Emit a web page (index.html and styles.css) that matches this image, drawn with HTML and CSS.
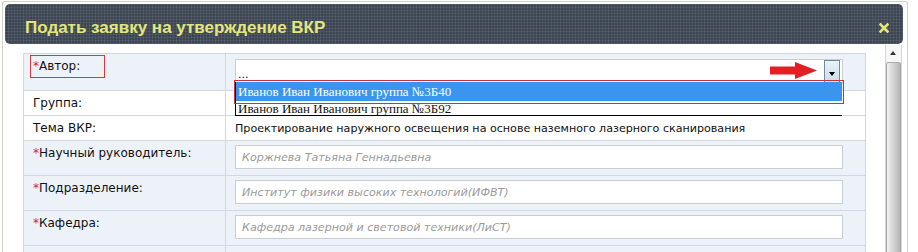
FILE: index.html
```html
<!DOCTYPE html>
<html lang="ru">
<head>
    <meta charset="UTF-8">
    <title>Подать заявку на утверждение ВКР</title>
    <link rel="stylesheet" href="styles.css">
</head>
<body>
    <div class="dialog">
        <div class="dialog-header">
            <h1>Подать заявку на утверждение ВКР</h1>
            <svg class="close" width="10" height="10" viewBox="0 0 10 10">
                <path d="M1.5 1.5 L8.5 8.5 M8.5 1.5 L1.5 8.5" stroke="#e4e67a" stroke-width="2.6" stroke-linecap="square"/>
            </svg>
        </div>
        <div class="dialog-body">
            <div class="form-area">
                <table class="form">
                    <tr class="alt row-author">
                        <td class="lbl"><span class="marked"><span class="req">*</span>Автор:</span></td>
                        <td class="val">
                            <div class="select">
                                <span class="select-text">...</span>
                                <svg class="arrow" width="47" height="17" viewBox="0 0 47 17">
                                    <path d="M0 4.5 H25 V0 L47 8.5 L25 17 V12.5 H0 Z" fill="#e11f24"/>
                                </svg>
                                <span class="select-btn"><span class="tri"></span></span>
                            </div>
                            <div class="dropdown">
                                <div class="opt active">Иванов Иван Иванович группа №3Б40</div>
                                <div class="opt">Иванов Иван Иванович группа №3Б92</div>
                            </div>
                        </td>
                    </tr>
                    <tr class="short">
                        <td class="lbl">Группа:</td>
                        <td class="val"></td>
                    </tr>
                    <tr class="short">
                        <td class="lbl">Тема ВКР:</td>
                        <td class="val">Проектирование наружного освещения на основе наземного лазерного сканирования</td>
                    </tr>
                    <tr class="alt">
                        <td class="lbl"><span class="req">*</span>Научный руководитель:</td>
                        <td class="val"><div class="input">Коржнева Татьяна Геннадьевна</div></td>
                    </tr>
                    <tr class="alt">
                        <td class="lbl"><span class="req">*</span>Подразделение:</td>
                        <td class="val"><div class="input">Институт физики высоких технологий(ИФВТ)</div></td>
                    </tr>
                    <tr class="alt">
                        <td class="lbl"><span class="req">*</span>Кафедра:</td>
                        <td class="val"><div class="input">Кафедра лазерной и световой техники(ЛиСТ)</div></td>
                    </tr>
                    <tr class="alt">
                        <td class="lbl"></td>
                        <td class="val"></td>
                    </tr>
                </table>
            </div>
            <div class="scrollbar">
                <span class="up"></span>
                <div class="thumb"></div>
            </div>
        </div>
    </div>
</body>
</html>
```
FILE: styles.css
```css
body {
    margin: 0;
    background: #fff;
    font-family: "DejaVu Sans", Verdana, sans-serif;
    font-size: 12px;
    color: #111;
    overflow: hidden;
}
.dialog {
    margin: 1px 0 0 2px;
    width: 904px;
    height: 260px;
    border: 1px solid #d2d3c6;
    border-bottom: none;
    border-radius: 3px 3px 0 0;
}
.dialog-header {
    margin: 2px 0 0 2px;
    width: 898px;
    height: 40px;
    border-radius: 5px;
    background-color: #3c4653;
    background-image:
        repeating-linear-gradient(90deg, rgba(255,255,255,0.07) 0 1px, transparent 1px 3px),
        repeating-linear-gradient(0deg, rgba(255,255,255,0.07) 0 1px, transparent 1px 3px);
    display: flex;
    align-items: center;
    justify-content: space-between;
    box-sizing: border-box;
    padding: 7px 14px 0 20px;
}
.dialog-header h1 {
    margin: 0;
    font-family: "Liberation Sans", Arial, sans-serif;
    font-size: 17px;
    font-weight: bold;
    color: #e3e67c;
}
.dialog-body {
    display: flex;
}
.form-area {
    padding: 9px 0 0 20px;
}
.form {
    width: 843px;
    border-collapse: collapse;
}
.form td {
    border: 1px solid #d0d8e0;
    vertical-align: top;
    padding: 0;
}
.form .lbl {
    width: 192px;
    padding: 5px 0 0 9px;
}
.form .val {
    padding: 4px 22px 6px 9px;
    font-size: 11.1px;
}
.form tr.alt td {
    background: #edf2f9;
    height: 22px;
}
.form tr.short td {
    height: 17px;
    padding-top: 5px;
    padding-bottom: 1px;
    background: #fff;
}
.form tr.short .val {
    padding-top: 6px;
}
.row-author td {
    height: 25px !important;
}
.row-author .lbl {
    padding-top: 1px;
    padding-left: 6px;
}
.row-author .val {
    position: relative;
    padding-top: 5px;
}
.req {
    color: #e0242a;
}
.marked {
    display: inline-block;
    border: 1px solid #d23a44;
    padding: 3px 18px 4px 2px;
    width: 53px;
}
.select {
    position: relative;
    height: 25px;
    border: 1px solid #c9ced4;
    background: #fff;
    box-sizing: border-box;
}
.select-text {
    position: absolute;
    left: 2px;
    bottom: 2px;
    font-size: 11px;
}
.arrow {
    position: absolute;
    left: 534px;
    top: 2px;
}
.select-btn {
    position: absolute;
    right: 2px;
    top: 0;
    width: 14px;
    height: 23px;
    border: 1px solid #6f8d99;
    background: linear-gradient(#e9f1f8, #c9dbea);
}
.tri {
    position: absolute;
    left: 4px;
    top: 11px;
    border-left: 3px solid transparent;
    border-right: 3px solid transparent;
    border-top: 4px solid #000;
}
.dropdown {
    position: absolute;
    left: 9px;
    top: 28px;
    width: 606px;
    font-family: "Liberation Serif", "Times New Roman", serif;
    font-size: 13px;
    border-left: 1px solid #000;
    border-bottom: 1px solid #000;
    background: #fff;
}
.opt {
    height: 13px;
    line-height: 13px;
    padding-left: 2px;
    overflow: hidden;
}
.opt.active {
    height: 19px;
    line-height: 19px;
    background: #3a95ee;
    color: #fff;
    border-bottom: 1px solid #fff;
    outline: 1px solid #c8323c;
    outline-offset: 1px;
}
.input {
    height: 24px;
    box-sizing: border-box;
    border: 1px solid #c8cdd3;
    background: #fff;
    padding: 5px 6px;
    color: #9a9a9a;
    font-style: italic;
}
.scrollbar {
    position: relative;
    margin: 1px 0 0 19px;
    width: 15px;
    height: 210px;
    border-left: 1px solid #d6d6d6;
    border-right: 1px solid #d6d6d6;
    background: #f7f7f7;
}
.up {
    position: absolute;
    left: 4px;
    top: 6px;
    border-left: 3px solid transparent;
    border-right: 3px solid transparent;
    border-bottom: 4px solid #333;
}
.thumb {
    position: absolute;
    left: 0;
    top: 17px;
    width: 13px;
    height: 200px;
    border: 1px solid #a8a8a8;
    border-radius: 2px;
    background: linear-gradient(90deg, #f2f2f2, #d8d8d8 40%, #c8c8c8 70%, #b4b4b4);
}
```
